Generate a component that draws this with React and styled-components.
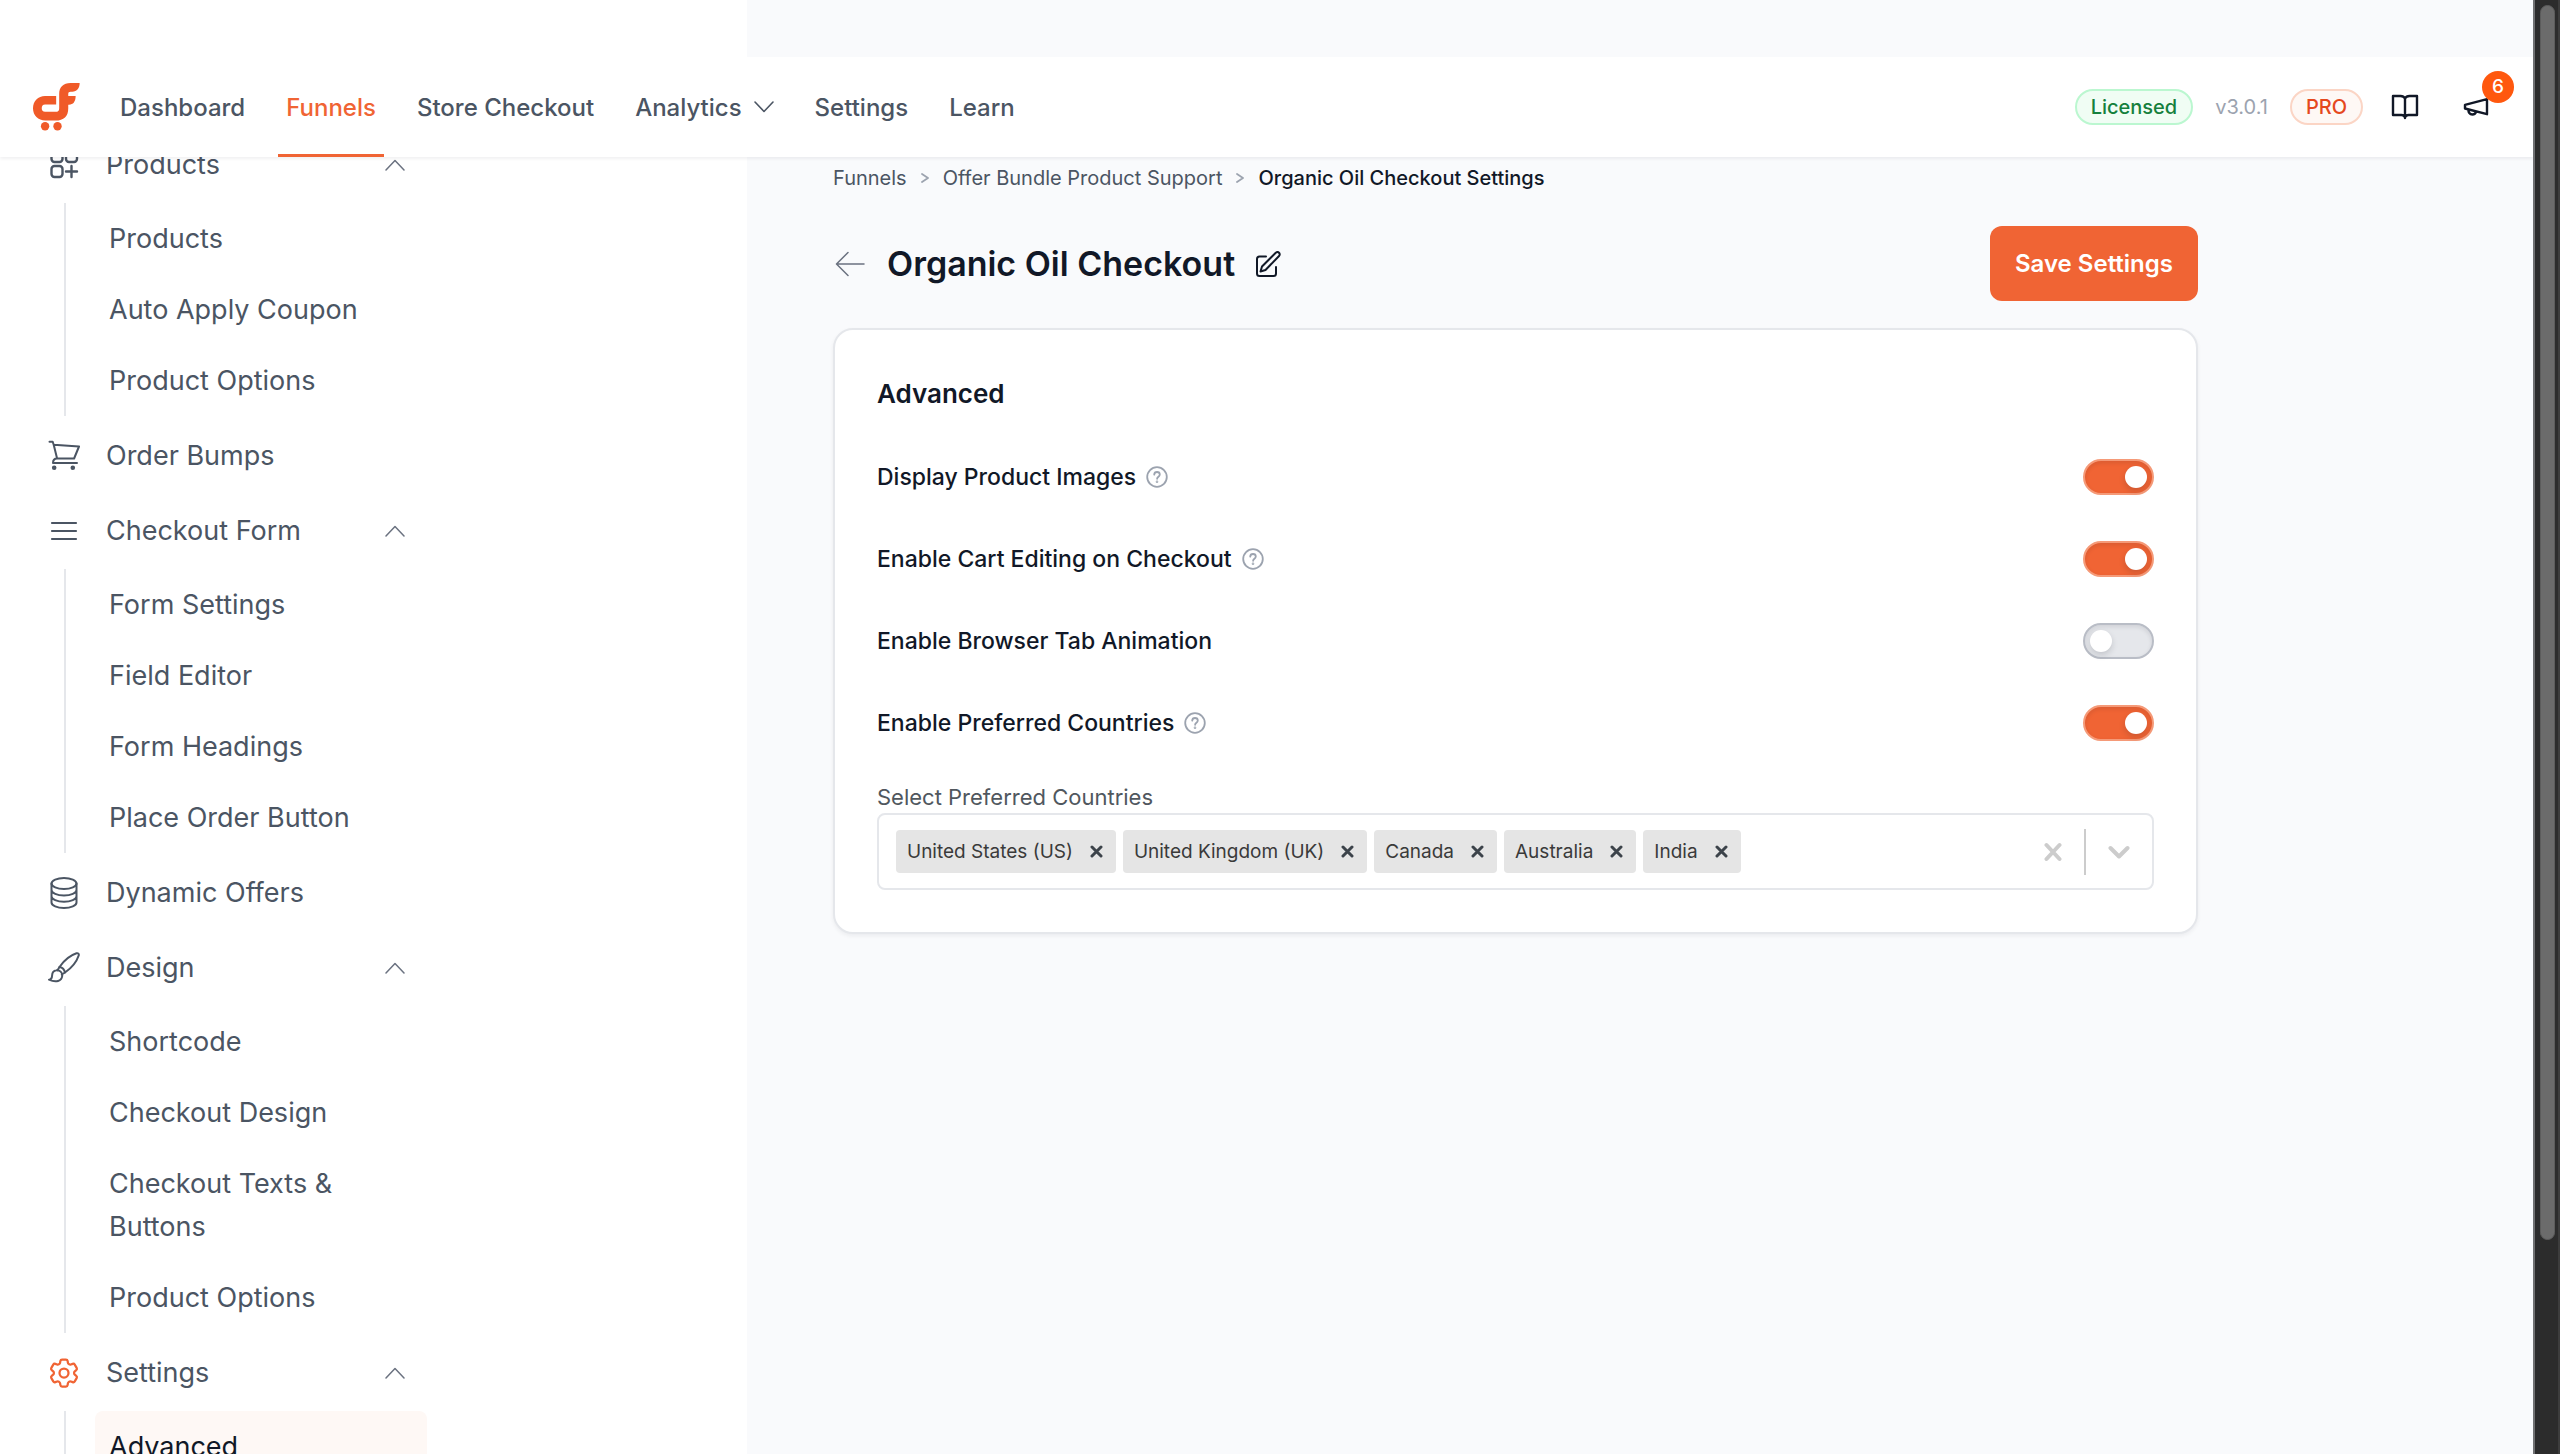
import React, { useState } from "react";
import styled, { createGlobalStyle } from "styled-components";
import { HiOutlineCog6Tooth } from "react-icons/hi2";

const color = {
  brand: "#f06434",
  ink: "#111827",
  slate: "#4b5563",
  soft: "#6b7280",
  muted: "#9ca3af",
  line: "#e5e7eb",
  page: "#f9fafc",
};

const GlobalStyle = createGlobalStyle`
  *, *::before, *::after { box-sizing: border-box; }
  body {
    margin: 0;
    background: ${color.page};
    color: ${color.ink};
    font-family: Inter, "Liberation Sans", sans-serif;
  }
  button, input { font: inherit; color: inherit; }
  a { color: inherit; text-decoration: none; }
  ul, ol { list-style: none; margin: 0; padding: 0; }
  svg { display: block; flex: none; }
`;

/* ---------- frame ---------- */

const Frame = styled.div`
  display: grid;
  grid-template-columns: 1fr 27px;
  height: 100vh;
  overflow: hidden;
`;

const Shell = styled.div`
  position: relative;
  display: grid;
  grid-template-columns: 747px 1fr;
  min-height: 0;
  overflow: hidden;
`;

const ScrollTrack = styled.div`
  background: #2c2c2c;
  border-left: 2px solid #6f7072;
  border-right: 2px solid #3d3d3d;
  padding: 5px 3px 0 5px;
`;

const ScrollThumb = styled.div`
  height: 1235px;
  border-radius: 8px;
  background: #6b6b6b;
  border: 1px solid #5c5c5c;
`;

/* ---------- header ---------- */

const Header = styled.header`
  position: absolute;
  top: 57px;
  left: 0;
  right: 0;
  z-index: 2;
  height: 100px;
  padding: 0 44px 0 33px;
  display: flex;
  align-items: stretch;
  justify-content: space-between;
  background: #fff;
  box-shadow: 0 2px 3px rgba(17, 24, 39, 0.06);
`;

const HeaderSide = styled.div`
  display: flex;
  align-items: center;
  gap: ${(p) => p.$gap}px;
`;

const TopNav = styled.nav`
  display: flex;
  align-self: stretch;
  gap: 25px;
`;

const TopLink = styled.a`
  display: flex;
  align-items: center;
  gap: 12px;
  padding: 3px 8px 0;
  border-bottom: 3px solid ${(p) => (p.$active ? color.brand : "transparent")};
  color: ${(p) => (p.$active ? color.brand : color.slate)};
  font-size: 24px;
  font-weight: 500;
  white-space: nowrap;
`;

const Pill = styled.span`
  display: flex;
  align-items: center;
  height: 36px;
  padding: 0 14px;
  border: 2px solid ${(p) => (p.$tone === "green" ? "#bbf7d0" : "#fbd5c5")};
  border-radius: 18px;
  background: ${(p) => (p.$tone === "green" ? "#f0fdf4" : "#fef8f5")};
  color: ${(p) => (p.$tone === "green" ? "#15803d" : "#e5481d")};
  font-size: 20px;
  font-weight: 500;
`;

const Version = styled.span`
  color: ${color.muted};
  font-size: 20px;
`;

const HeaderIcons = styled.div`
  display: flex;
  align-items: center;
  gap: 44px;
  padding-left: 6px;
`;

const IconButton = styled.button`
  position: relative;
  display: flex;
  padding: 0;
  border: 0;
  background: none;
  cursor: pointer;
`;

const Badge = styled.span`
  position: absolute;
  left: 19px;
  bottom: 13px;
  width: 32px;
  height: 32px;
  border-radius: 50%;
  background: #ff580e;
  color: #fff;
  font-size: 19px;
  font-weight: 500;
  line-height: 32px;
  text-align: center;
`;

/* ---------- sidebar ---------- */

const Sidebar = styled.aside`
  background: #fff;
  padding: 129px 0 0 48px;
  overflow: hidden;
`;

const Groups = styled.ul`
  display: flex;
  flex-direction: column;
  gap: 4px;
  width: 379px;
`;

const Group = styled.li`
  display: flex;
  flex-direction: column;
  gap: 3px;
`;

const GroupButton = styled.button`
  display: grid;
  grid-template-columns: 32px 1fr auto;
  align-items: center;
  column-gap: 26px;
  height: 71px;
  padding: 0 22px 0 0;
  border: 0;
  background: none;
  color: ${color.slate};
  font-size: 27px;
  text-align: left;
  cursor: pointer;
`;

const IconSlot = styled.span`
  display: flex;
  justify-content: center;
  color: ${(p) => (p.$active ? color.brand : color.slate)};
`;

const SubList = styled.ul`
  margin-left: 16px;
  padding-left: 29px;
  border-left: 2px solid ${color.line};
`;

const SubLink = styled.a`
  display: block;
  padding: 14px;
  border-radius: 8px;
  background: ${(p) => (p.$active ? "#fef8f5" : "transparent")};
  color: ${(p) => (p.$active ? color.ink : color.slate)};
  font-size: 27px;
  line-height: 43px;
`;

/* ---------- content ---------- */

const Content = styled.main`
  width: 100%;
  max-width: 1451px;
  padding: 163px 0 0 86px;
`;

const Crumbs = styled.ol`
  display: flex;
  align-items: center;
  gap: 14px;
  font-size: 20px;
  line-height: 30px;
  color: ${color.slate};
`;

const Crumb = styled.li`
  display: flex;
  align-items: center;
  gap: 14px;
  color: ${(p) => (p.$current ? color.ink : color.slate)};
  font-weight: ${(p) => (p.$current ? 500 : 400)};
`;

const TitleBar = styled.div`
  display: flex;
  align-items: center;
  justify-content: space-between;
  margin: 33px 0 27px;
`;

const TitleGroup = styled.div`
  display: flex;
  align-items: center;
  gap: 20px;
`;

const Title = styled.h1`
  margin: 0;
  font-size: 34px;
  font-weight: 600;
  line-height: 44px;
`;

const SaveButton = styled.button`
  height: 75px;
  padding: 0 25px;
  border: 0;
  border-radius: 12px;
  background: ${color.brand};
  color: #fff;
  font-size: 24px;
  font-weight: 600;
  cursor: pointer;
`;

const Card = styled.section`
  padding: 42px;
  border: 2px solid ${color.line};
  border-radius: 20px;
  background: #fff;
  box-shadow: 0 2px 4px rgba(17, 24, 39, 0.06);
`;

const CardTitle = styled.h2`
  margin: 0 0 43px;
  font-size: 26px;
  font-weight: 600;
  line-height: 44px;
`;

const Options = styled.div`
  display: flex;
  flex-direction: column;
  gap: 46px;
`;

const OptionRow = styled.div`
  display: flex;
  align-items: center;
  justify-content: space-between;
  height: 36px;
`;

const OptionText = styled.div`
  display: flex;
  align-items: center;
  gap: 10px;
`;

const OptionLabel = styled.label`
  font-size: 23px;
  font-weight: 500;
  line-height: 36px;
`;

const Toggle = styled.input.attrs({ type: "checkbox" })`
  appearance: none;
  display: flex;
  align-items: center;
  width: 71px;
  height: 36px;
  margin: 0;
  padding: 0 5px;
  border: 2px solid #b9bdc6;
  border-radius: 18px;
  background: ${color.line};
  box-shadow: inset 0 2px 4px rgba(17, 24, 39, 0.1);
  cursor: pointer;

  &::before {
    content: "";
    width: 22px;
    height: 22px;
    border-radius: 50%;
    background: #fff;
    box-shadow: 0 3px 6px rgba(17, 24, 39, 0.16);
  }

  &:checked {
    justify-content: flex-end;
    border-color: #f59a78;
    background: ${color.brand};
  }
`;

const FieldLabel = styled.label`
  display: block;
  margin-top: 40px;
  color: #50575e;
  font-size: 22px;
  line-height: 32px;
`;

const SelectBox = styled.div`
  display: flex;
  align-items: center;
  height: 77px;
  padding: 0 22px 0 17px;
  border: 2px solid ${color.line};
  border-radius: 8px;
  background: #fff;
`;

const Chips = styled.ul`
  display: flex;
  gap: 7px;
`;

const Chip = styled.li`
  display: flex;
  align-items: center;
  height: 43px;
  padding-left: 11px;
  border-radius: 4px;
  background: #e5e5e5;
  color: #3a3a3a;
  font-size: 19px;
`;

const ChipRemove = styled.button`
  display: flex;
  align-items: center;
  height: 43px;
  padding: 0 13px 0 17px;
  border: 0;
  background: none;
  color: #3c434a;
  cursor: pointer;
`;

const SearchInput = styled.input`
  flex: 1;
  min-width: 0;
  height: 43px;
  margin-left: 8px;
  padding: 0;
  border: 0;
  outline: 0;
  background: none;
  font-size: 19px;
`;

const Indicators = styled.div`
  display: flex;
  align-items: center;
  gap: 22px;
  color: #cccccc;
`;

const Divider = styled.span`
  width: 2px;
  height: 46px;
  background: #cccccc;
`;

/* ---------- icons ---------- */

const Icon = ({ w = 32, h = w, box, stroke = 2, children, ...rest }) => (
  <svg
    width={w}
    height={h}
    viewBox={box || `0 0 ${w} ${h}`}
    fill="none"
    stroke="currentColor"
    strokeWidth={stroke}
    strokeLinecap="round"
    strokeLinejoin="round"
    aria-hidden="true"
    {...rest}
  >
    {children}
  </svg>
);

const Logo = () => (
  <svg width="47" height="48" viewBox="41 38 140 143" fill="#f05a28" aria-label="CartFlows">
    <path d="M110 77H77C56 77 41 92 41 113.500C41 135 56 150 78 150H108C133 150 146 137 146 114V103H148C161 103 168 93 168 77H146V71C146 66 148 64 153 64H158C172 64 180 53 180 38H153C131 38 119 50 119 71V113C119 121 116 124 108 124H77C70 124 67 120 67 113.500C67 106 70 102 77 102H110Z" />
    <circle cx="77" cy="167" r="12.500" />
    <circle cx="114" cy="167" r="12.500" />
  </svg>
);

const ProductsIcon = () => (
  <Icon stroke={2.4}>
    <rect x="3.500" y="2" width="11" height="11" rx="3" />
    <rect x="18" y="2" width="11" height="11" rx="3" />
    <rect x="3.500" y="17" width="11" height="11" rx="3" />
    <path d="M23.500 17v11M18 22.500h11" />
  </Icon>
);

const CartIcon = () => (
  <Icon>
    <path d="M1.500 1.800h3.200l1 3 3.400 13.700h17L31 6.500 5.700 4.800M9 18.500c-2.500 0-4 1.600-4 4.500h24" />
    <circle cx="6.200" cy="27.800" r="1.300" fill="currentColor" />
    <circle cx="24.800" cy="27.800" r="1.300" fill="currentColor" />
  </Icon>
);

const MenuIcon = () => (
  <Icon stroke={2.2}>
    <path d="M4 8h24M4 16h24M4 24h24" />
  </Icon>
);

const DatabaseIcon = () => (
  <Icon>
    <ellipse cx="16" cy="6.500" rx="12.500" ry="5.500" />
    <path d="M3.500 6.500v19c0 3 5.600 5.500 12.500 5.500s12.500-2.500 12.500-5.500v-19M3.500 13c0 3 5.600 5.500 12.500 5.500S28.500 16 28.500 13M3.500 19.300c0 3 5.600 5.500 12.500 5.500s12.500-2.500 12.500-5.500" />
  </Icon>
);

const BrushIcon = () => (
  <Icon>
    <path d="M11.500 15C16 8.500 22.500 3.300 28.500 1.300c1.600-.5 2.700.6 2.200 2.200C28.700 9.500 23.500 16 17 20.500" />
    <path d="M11.500 15c3 .6 4.900 2.500 5.500 5.500l-3.200 2M11.500 15l-2 3.300" />
    <path d="M8.300 18.300c3.300-.6 6.300 2.200 5.900 5.700-.5 5-6.200 7-13.200 3.700 2.600-.2 3-1.800 3.100-4.200.1-2.700 1.600-4.800 4.200-5.200z" />
  </Icon>
);

const GearIcon = () => <HiOutlineCog6Tooth size={36} />;

const ChevronUp = () => (
  <Icon w={20} h={12} stroke={1.5} color={color.soft}>
    <path d="M1 11l9-9.500L19 11" />
  </Icon>
);

const ChevronDown = () => (
  <Icon w={20} h={12} stroke={1.6}>
    <path d="M1 1l9 9.500L19 1" />
  </Icon>
);

const BookIcon = () => (
  <Icon w={28} h={26} stroke={2.4}>
    <path d="M14 4.500C13 2.600 11.500 2 9.500 2H2v19h8.500c2 0 3 .8 3.500 2.500.5-1.700 1.500-2.500 3.500-2.500H26V2h-7.500C16.500 2 15 2.600 14 4.500zM14 4.500v19.500" />
  </Icon>
);

const MegaphoneIcon = () => (
  <Icon w={26} h={18} stroke={2.4}>
    <path d="M2 6.800L24 1.200v15L2 10.500zM5.500 11.500c-.4 2.900 1.300 5 3.800 5 2 0 3.400-1.200 3.800-3" />
  </Icon>
);

const ArrowLeft = () => (
  <Icon w={34} h={26} stroke={1.5} color={color.soft}>
    <path d="M31 13H4M15 1.500L3.500 13 15 24.500" />
  </Icon>
);

const EditIcon = () => (
  <Icon w={26} h={26} stroke={2}>
    <path d="M11 5.500H4.500c-1.700 0-2.500.9-2.500 2.500v14.500C2 24.200 2.900 25 4.500 25h14c1.700 0 2.500-.8 2.500-2.500V16" />
    <path d="M7 15.500L20.500 2c1.200-1.200 2.500-1.200 3.500-.2s1 2.300-.2 3.500L10.500 19l-5 1.500z" />
  </Icon>
);

const HelpIcon = () => (
  <Icon w={22} h={22} stroke={1.8} color={color.muted}>
    <circle cx="11" cy="11" r="9.800" />
    <path d="M8.200 8.600c.1-1.600 1.200-2.600 2.800-2.600s2.800 1 2.800 2.500c0 2.200-2.700 2.200-2.700 4.300" />
    <circle cx="11" cy="15.800" r=".4" fill="currentColor" />
  </Icon>
);

const CrumbArrow = () => (
  <Icon w={8} h={12} stroke={1.8} color={color.muted}>
    <path d="M1 2l6 4-6 4" />
  </Icon>
);

const SmallCross = () => (
  <Icon w={13} h={13} stroke={3}>
    <path d="M2 2l9 9M11 2l-9 9" />
  </Icon>
);

const LargeCross = () => (
  <Icon w={18} h={20} stroke={4}>
    <path d="M2.500 3l13 14M15.500 3l-13 14" />
  </Icon>
);

const SelectChevron = () => (
  <Icon w={22} h={14} stroke={4}>
    <path d="M2.500 3L11 11.500 19.500 3" />
  </Icon>
);

/* ---------- data ---------- */

const topLinks = [
  { label: "Dashboard" },
  { label: "Funnels", active: true },
  { label: "Store Checkout" },
  { label: "Analytics", menu: true },
  { label: "Settings" },
  { label: "Learn" },
];

const groups = [
  { label: "Products", Glyph: ProductsIcon, items: ["Products", "Auto Apply Coupon", "Product Options"] },
  { label: "Order Bumps", Glyph: CartIcon },
  {
    label: "Checkout Form",
    Glyph: MenuIcon,
    items: ["Form Settings", "Field Editor", "Form Headings", "Place Order Button"],
  },
  { label: "Dynamic Offers", Glyph: DatabaseIcon },
  {
    label: "Design",
    Glyph: BrushIcon,
    items: ["Shortcode", "Checkout Design", "Checkout Texts & Buttons", "Product Options"],
  },
  { label: "Settings", Glyph: GearIcon, active: true, items: ["Advanced"] },
];

const options = [
  { id: "images", label: "Display Product Images", help: true, on: true },
  { id: "cart", label: "Enable Cart Editing on Checkout", help: true, on: true },
  { id: "tab", label: "Enable Browser Tab Animation", help: false, on: false },
  { id: "countries", label: "Enable Preferred Countries", help: true, on: true },
];

const allCountries = ["United States (US)", "United Kingdom (UK)", "Canada", "Australia", "India"];

/* ---------- page ---------- */

export default function App() {
  const [countries, setCountries] = useState(allCountries);

  return (
    <Frame>
      <GlobalStyle />
      <Shell>
        <Header>
          <HeaderSide $gap={32}>
            <Logo />
            <TopNav aria-label="Main">
              {topLinks.map((l) => (
                <TopLink key={l.label} href="#" $active={l.active}>
                  {l.label}
                  {l.menu && <ChevronDown />}
                </TopLink>
              ))}
            </TopNav>
          </HeaderSide>
          <HeaderSide $gap={22}>
            <Pill $tone="green">Licensed</Pill>
            <Version>v3.0.1</Version>
            <Pill $tone="orange">PRO</Pill>
            <HeaderIcons>
              <IconButton type="button" aria-label="Docs">
                <BookIcon />
              </IconButton>
              <IconButton type="button" aria-label="News">
                <MegaphoneIcon />
                <Badge>6</Badge>
              </IconButton>
            </HeaderIcons>
          </HeaderSide>
        </Header>

        <Sidebar>
          <Groups>
            {groups.map(({ label, Glyph, active, items }) => (
              <Group key={label}>
                <GroupButton type="button">
                  <IconSlot $active={active}>
                    <Glyph />
                  </IconSlot>
                  {label}
                  {items && <ChevronUp />}
                </GroupButton>
                {items && (
                  <SubList>
                    {items.map((item) => (
                      <li key={item}>
                        <SubLink href="#" $active={active}>
                          {item}
                        </SubLink>
                      </li>
                    ))}
                  </SubList>
                )}
              </Group>
            ))}
          </Groups>
        </Sidebar>

        <Content>
          <nav aria-label="Breadcrumb">
            <Crumbs>
              <Crumb>
                <a href="#">Funnels</a>
                <CrumbArrow />
              </Crumb>
              <Crumb>
                <a href="#">Offer Bundle Product Support</a>
                <CrumbArrow />
              </Crumb>
              <Crumb $current>Organic Oil Checkout Settings</Crumb>
            </Crumbs>
          </nav>

          <TitleBar>
            <TitleGroup>
              <IconButton type="button" aria-label="Back">
                <ArrowLeft />
              </IconButton>
              <Title>Organic Oil Checkout</Title>
              <IconButton type="button" aria-label="Edit title">
                <EditIcon />
              </IconButton>
            </TitleGroup>
            <SaveButton type="button">Save Settings</SaveButton>
          </TitleBar>

          <Card>
            <CardTitle>Advanced</CardTitle>
            <Options>
              {options.map((o) => (
                <OptionRow key={o.id}>
                  <OptionText>
                    <OptionLabel htmlFor={o.id}>{o.label}</OptionLabel>
                    {o.help && <HelpIcon />}
                  </OptionText>
                  <Toggle id={o.id} defaultChecked={o.on} />
                </OptionRow>
              ))}
            </Options>

            <FieldLabel htmlFor="preferred">Select Preferred Countries</FieldLabel>
            <SelectBox>
              <Chips>
                {countries.map((c) => (
                  <Chip key={c}>
                    {c}
                    <ChipRemove
                      type="button"
                      aria-label={`Remove ${c}`}
                      onClick={() => setCountries(countries.filter((x) => x !== c))}
                    >
                      <SmallCross />
                    </ChipRemove>
                  </Chip>
                ))}
              </Chips>
              <SearchInput id="preferred" role="combobox" aria-expanded="false" />
              <Indicators>
                <IconButton type="button" aria-label="Clear all" onClick={() => setCountries([])}>
                  <LargeCross />
                </IconButton>
                <Divider />
                <IconButton type="button" aria-label="Open list">
                  <SelectChevron />
                </IconButton>
              </Indicators>
            </SelectBox>
          </Card>
        </Content>
      </Shell>
      <ScrollTrack>
        <ScrollThumb />
      </ScrollTrack>
    </Frame>
  );
}
